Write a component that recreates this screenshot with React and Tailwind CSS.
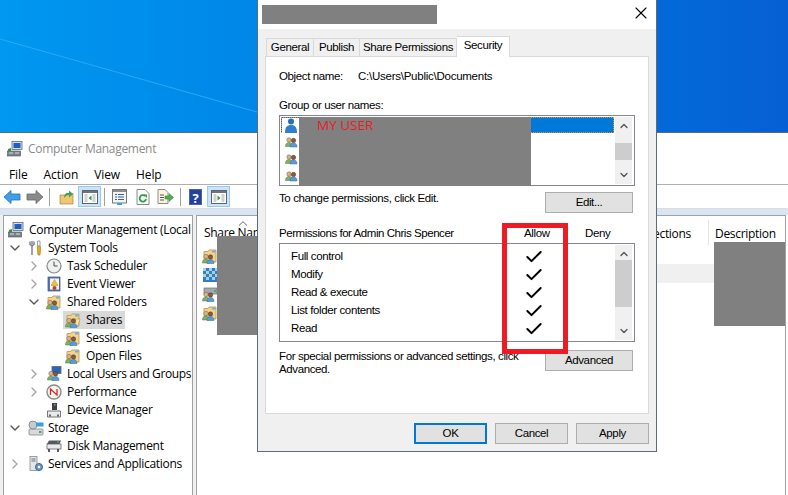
import { ChevronRight, ChevronDown, ChevronUp, Check, X } from 'lucide-react'

// ── Small console icons ───────────────────────────────────────────────────────

function People({ x = 0, y = 0 }) {
  return (
    <g transform={`translate(${x} ${y})`}>
      <circle cx="4" cy="3" r="2.2" fill="#d8b48a" stroke="#7a5a3a" strokeWidth="0.5" />
      <path d="M0.5 9.5c0-3 1.5-4 3.5-4s3.5 1 3.5 4z" fill="#7fb069" stroke="#4d7a3a" strokeWidth="0.5" />
      <circle cx="8.5" cy="3.5" r="2.2" fill="#8a5a3a" stroke="#4a3020" strokeWidth="0.5" />
      <path d="M5 10c0-3 1.5-4 3.5-4s3.5 1 3.5 4z" fill="#5b9bd5" stroke="#2d6ca8" strokeWidth="0.5" />
    </g>
  )
}

function SharedFolder({ open }) {
  return (
    <svg width="16" height="16" viewBox="0 0 16 16">
      <path d="M2 3.5h4l1-1.5h7v12H2z" fill="#f3d48a" stroke="#b8944f" strokeWidth="0.8" />
      <path d="M10 2.5h3.5v2H10z" fill="#6bb0e0" />
      {open && <path d="M6 7h9l-2 7H6z" fill="#f7e0a6" stroke="#b8944f" strokeWidth="0.6" />}
      <People x={0} y={5.5} />
    </svg>
  )
}

function PcIcon() {
  return (
    <svg width="16" height="16" viewBox="0 0 16 16">
      <rect x="5" y="0.5" width="10" height="8" fill="#d5dbe3" stroke="#5d6a7a" strokeWidth="0.8" />
      <rect x="6.5" y="2" width="7" height="5" fill="#1f5fc4" />
      <rect x="0.5" y="10" width="13" height="5" fill="#7c828a" stroke="#4b5058" strokeWidth="0.6" />
      <path d="M2 12h4M8 12h4" stroke="#d8dbe0" />
      <path d="M1 8l3-1v3H1z" fill="#3c8d3c" />
    </svg>
  )
}

function ToolsIcon() {
  return (
    <svg width="16" height="16" viewBox="0 0 16 16">
      <path d="M4 1v3.5M2 1.5v3l2 1.5 2-1.5v-3M4 6v9" fill="none" stroke="#7a7f86" strokeWidth="1.4" />
      <path d="M9.5 1h2.5v5h-2.500z" fill="#fff" stroke="#777" strokeWidth="0.7" />
      <path d="M9.5 6.500h3v4l-.5 4.500h-2l-.5-4.500z" fill="#e5a91f" stroke="#a87610" strokeWidth="0.6" />
    </svg>
  )
}

function ClockIcon() {
  return (
    <svg width="16" height="16" viewBox="0 0 16 16">
      <circle cx="8" cy="8" r="7" fill="#eef0f2" stroke="#8a8a80" strokeWidth="1.2" />
      <path d="M8 3.500V8h3.500" fill="none" stroke="#4a4a4a" strokeWidth="1" />
    </svg>
  )
}

function EventIcon() {
  return (
    <svg width="16" height="16" viewBox="0 0 16 16">
      <rect x="2" y="1" width="12" height="14" fill="#5a78b0" stroke="#33507f" strokeWidth="0.7" />
      <rect x="4" y="2.500" width="9" height="11" fill="#f2f4f8" />
      <path d="M8.500 3.500l3.500 6H5z" fill="#f2c230" stroke="#b88a10" strokeWidth="0.5" />
      <circle cx="8.500" cy="12" r="2" fill="#c83b3b" />
    </svg>
  )
}

function UsersPcIcon() {
  return (
    <svg width="16" height="16" viewBox="0 0 16 16">
      <rect x="6" y="0.500" width="9" height="7" fill="#2c62b8" stroke="#5d6a7a" strokeWidth="0.8" />
      <People x={1} y={4.500} />
    </svg>
  )
}

function PerfIcon() {
  return (
    <svg width="16" height="16" viewBox="0 0 16 16">
      <circle cx="8" cy="8" r="7" fill="#f6f3ee" stroke="#8b8b84" strokeWidth="1.4" />
      <path d="M4.500 11V5l6.500 6V5" fill="none" stroke="#c8322d" strokeWidth="1.3" />
    </svg>
  )
}

function DeviceIcon() {
  return (
    <svg width="16" height="16" viewBox="0 0 16 16">
      <rect x="6" y="1" width="5" height="7" fill="#3e434a" />
      <path d="M1.500 9h13v6h-13z" fill="#e8eaec" stroke="#555" strokeWidth="0.8" />
      <path d="M4 12.500v2M12 12.500v2" stroke="#333" strokeWidth="1.400" />
      <rect x="8" y="2" width="1.500" height="1.500" fill="#58c058" />
    </svg>
  )
}

function StorageIcon() {
  return (
    <svg width="16" height="16" viewBox="0 0 16 16">
      <rect x="1" y="9" width="14" height="6" rx="1" fill="#d7dadd" stroke="#73787e" strokeWidth="0.7" />
      <rect x="11" y="11" width="2.500" height="2" fill="#46b046" />
      <circle cx="5" cy="5" r="4" fill="#c6cbd0" stroke="#6e7378" strokeWidth="0.7" />
      <rect x="8" y="2.500" width="7.500" height="4" fill="#38a0d8" />
    </svg>
  )
}

function DiskIcon() {
  return (
    <svg width="16" height="16" viewBox="0 0 16 16">
      <path d="M3 2.500h12L13.500 6H1z" fill="#555a60" />
      <rect x="1" y="6" width="14" height="5" fill="#e8eaec" stroke="#555" strokeWidth="0.7" />
      <path d="M3 11v3M12 11v3" stroke="#333" strokeWidth="1.600" />
      <rect x="11" y="3.500" width="2" height="1" fill="#58c058" />
    </svg>
  )
}

function ServicesIcon() {
  return (
    <svg width="16" height="16" viewBox="0 0 16 16">
      <rect x="2" y="0.500" width="7" height="14" fill="#e3e5e8" stroke="#787d84" strokeWidth="0.7" />
      <path d="M3.500 3h4M3.500 5h4" stroke="#6f747a" />
      <circle cx="11" cy="11" r="3.500" fill="#6a9bc8" stroke="#35658f" strokeWidth="1" />
      <circle cx="11" cy="11" r="1.200" fill="#fff" />
    </svg>
  )
}

function ShareTileIcon() {
  return (
    <svg width="16" height="16" viewBox="0 0 16 16">
      <rect x="1" y="1" width="14" height="14" fill="#2f7fc8" />
      <path d="M1 1h3v3H1zM7 1h3v3H7zM13 1h2v3h-2zM4 4h3v3H4zM10 4h3v3h-3zM1 7h3v3H1zM7 7h3v3H7zM13 7h2v3h-2zM4 10h3v3H4zM10 10h3v3h-3z" fill="#a9d2f0" />
    </svg>
  )
}

function PrinterShareIcon() {
  return (
    <svg width="16" height="16" viewBox="0 0 16 16">
      <rect x="2" y="2" width="13" height="6" fill="#a5a8ac" stroke="#6a6d72" strokeWidth="0.7" />
      <rect x="12" y="4" width="2" height="2" fill="#46b046" />
      <People x={0} y={5.500} />
    </svg>
  )
}

// ── Toolbar icons ─────────────────────────────────────────────────────────────

function Arrow({ left, gray }) {
  const fill = gray ? '#8a8a8a' : '#3f9fe8'
  const stroke = gray ? '#666666' : '#1f6fb8'
  return (
    <svg width="18" height="16" viewBox="0 0 18 16">
      <path
        d={left ? 'M1 8l7-6.500V5h9v6H8v3.500z' : 'M17 8l-7-6.500V5H1v6h9v3.500z'}
        fill={fill}
        stroke={stroke}
        strokeWidth="0.8"
      />
    </svg>
  )
}

function PaneIcon({ dir }) {
  return (
    <svg width="16" height="14" viewBox="0 0 16 14">
      <rect x="0.500" y="0.500" width="15" height="13" fill="#fff" stroke="#5f6368" />
      <rect x="1" y="1" width="14" height="2" fill="#6f7378" />
      <path d="M2.500 5h3M2.500 7h3M2.500 9h3M2.500 11h3M10.500 5h3M10.500 7h3M10.500 9h3M10.500 11h3" stroke="#8a8d91" strokeWidth="0.8" />
      <path d={dir === 'left' ? 'M9.500 5.500v5l-3-2.500z' : 'M6.500 5.500v5l3-2.500z'} fill="#2f9e44" />
    </svg>
  )
}

function ToolGlyph({ kind }) {
  if (kind === 'up') {
    return (
      <svg width="15" height="16" viewBox="0 0 15 16">
        <path d="M1 6h5l1-1.500h7V15H1z" fill="#eec774" stroke="#a8853f" strokeWidth="0.7" />
        <path d="M5 9c0-3 2-5 5-5V1.500L14 5l-4 3.500V6c-2 0-3.500 1-5 3z" fill="#3fa34d" />
      </svg>
    )
  }
  if (kind === 'props') {
    return (
      <svg width="15" height="16" viewBox="0 0 15 16">
        <rect x="0.500" y="0.500" width="14" height="13.500" fill="#f4f4f4" stroke="#777" />
        <rect x="1" y="1" width="13" height="2" fill="#8b8f94" />
        <path d="M3 5.500h2M6 5.500h6M3 8h2M6 8h6M3 10.500h2M6 10.500h6" stroke="#35649b" />
        <rect x="5" y="14" width="5" height="2" fill="#3f9fe8" />
      </svg>
    )
  }
  if (kind === 'refresh') {
    return (
      <svg width="14" height="16" viewBox="0 0 14 16">
        <path d="M1 .500h8l4 4v11H1z" fill="#fafafa" stroke="#8a8a8a" />
        <path d="M10 10a3.200 3.200 0 1 1-1-3" fill="none" stroke="#2f9e44" strokeWidth="1.800" />
        <path d="M7.500 5.500h3.500V9z" fill="#2f9e44" />
      </svg>
    )
  }
  return (
    <svg width="17" height="16" viewBox="0 0 17 16">
      <path d="M1 .500h7l3 3v11H1z" fill="#fbf4df" stroke="#8a8a8a" />
      <path d="M3 6h4M3 8.500h4M3 11h4" stroke="#555" />
      <path d="M8 7h4V4.500L16.500 8.500 12 12.500V10H8z" fill="#4caf50" stroke="#2e7d32" strokeWidth="0.5" />
    </svg>
  )
}

function HelpIcon() {
  return (
    <div className="w-[13px] h-[16px] bg-[#23409b] text-white font-bold text-[13px] leading-[16px] text-center border border-[#4a63b8]">?</div>
  )
}

function ToolButton({ active, children }) {
  return (
    <div className={`w-[23px] h-[21px] flex items-center justify-center border ${active ? 'bg-[#cce4f7] border-[#99c9ef]' : 'border-transparent'}`}>
      {children}
    </div>
  )
}

function ToolSep() {
  return <div className="w-px h-[18px] bg-[#a0a0a0] mx-[3px]" />
}

// ── Tree ──────────────────────────────────────────────────────────────────────

const treeRows = [
  { label: 'Computer Management (Local', pad: 'pl-[4px]', icon: PcIcon },
  { label: 'System Tools', pad: 'pl-[3px]', mr: 'mr-[5px]', gap: 'gap-[4px]', toggle: 'down', icon: ToolsIcon },
  { label: 'Task Scheduler', pad: 'pl-[22px]', mr: 'mr-[4px]', toggle: 'right', icon: ClockIcon },
  { label: 'Event Viewer', pad: 'pl-[22px]', mr: 'mr-[4px]', toggle: 'right', icon: EventIcon },
  { label: 'Shared Folders', pad: 'pl-[22px]', mr: 'mr-[4px]', toggle: 'down', icon: SharedFolder },
  { label: 'Shares', pad: 'pl-[61px]', icon: SharedFolder, selected: true, open: true },
  { label: 'Sessions', pad: 'pl-[61px]', icon: SharedFolder },
  { label: 'Open Files', pad: 'pl-[61px]', icon: SharedFolder },
  { label: 'Local Users and Groups', pad: 'pl-[22px]', mr: 'mr-[4px]', toggle: 'right', icon: UsersPcIcon, tight: true },
  { label: 'Performance', pad: 'pl-[22px]', mr: 'mr-[4px]', toggle: 'right', icon: PerfIcon },
  { label: 'Device Manager', pad: 'pl-[42px]', icon: DeviceIcon },
  { label: 'Storage', pad: 'pl-[3px]', mr: 'mr-[5px]', gap: 'gap-[4px]', toggle: 'down', icon: StorageIcon },
  { label: 'Disk Management', pad: 'pl-[42px]', icon: DiskIcon },
  { label: 'Services and Applications', pad: 'pl-[3px]', mr: 'mr-[5px]', gap: 'gap-[4px]', toggle: 'right', icon: ServicesIcon },
]

function TreeRow({ row }) {
  const Icon = row.icon
  return (
    <div className={`flex items-center h-[18px] whitespace-nowrap ${row.pad}`}>
      {row.toggle === 'down' && <ChevronDown size={16} strokeWidth={2} className={`text-[#555] shrink-0 ${row.mr}`} />}
      {row.toggle === 'right' && <ChevronRight size={16} strokeWidth={2} className={`text-[#a6a6a6] shrink-0 ${row.mr}`} />}
      <div className={`flex items-center h-[18px] pr-[3px] ${row.gap || 'gap-[5px]'} ${row.selected ? 'bg-[#d9d9d9] -ml-[2px] pl-[2px]' : ''}`}>
        <span className="shrink-0"><Icon open={row.open} /></span>
        <span className={row.tight ? 'tracking-[-0.4px]' : ''}>{row.label}</span>
      </div>
    </div>
  )
}

// ── Dialog bits ───────────────────────────────────────────────────────────────

function ScrollBar({ thumb }) {
  return (
    <div className="w-[17px] bg-[#f0f0f0] flex flex-col items-center shrink-0 self-stretch m-px mr-[2px]">
      <ChevronUp size={12} strokeWidth={2.500} className="text-[#505050] mt-[3px] shrink-0" />
      <div className={`w-full bg-[#cdcdcd] ${thumb}`} />
      <ChevronDown size={12} strokeWidth={2.500} className="text-[#505050] mt-auto mb-[3px] shrink-0" />
    </div>
  )
}

function DlgButton({ label, focus, className = '' }) {
  return (
    <div className={`h-[21px] flex items-center justify-center bg-[#e1e1e1] text-black ${focus ? 'border-2 border-[#0078d7]' : 'border border-[#adadad]'} ${className}`}>
      {label}
    </div>
  )
}

const permissions = ['Full control', 'Modify', 'Read & execute', 'List folder contents', 'Read']

function SecurityDialog() {
  return (
    <div className="absolute left-[257px] top-0 w-[400px] h-[452px] bg-[#f0f0f0] border border-[#5f6b78] border-t-0 flex flex-col text-[11.500px] text-black font-['Liberation_Sans',sans-serif] tracking-[-0.38px]">
      <div className="h-[29px] bg-white flex items-center justify-between shrink-0 pr-[5px]">
        <div className="w-[175px] h-[19px] bg-[#808080] ml-[4px] -mt-[1px]" />
        <X size={20} strokeWidth={1.300} className="text-black -mt-[3px]" />
      </div>

      <div className="flex items-end h-[27px] pl-[8px] shrink-0">
        <div className="h-[18px] w-[48px] flex items-center justify-center bg-[#f0f0f0] border border-[#d9d9d9] border-b-0">General</div>
        <div className="h-[18px] w-[46px] flex items-center justify-center bg-[#f0f0f0] border border-[#d9d9d9] border-b-0 border-l-0">Publish</div>
        <div className="h-[18px] w-[97px] flex items-center justify-center bg-[#f0f0f0] border border-[#d9d9d9] border-b-0 border-l-0">Share Permissions</div>
        <div className="h-[21px] w-[53px] flex items-center justify-center bg-white border border-[#d9d9d9] border-b-0 border-l-0 relative z-10 -mb-px pb-[2px]">Security</div>
      </div>

      <div className="ml-[7px] w-[384px] h-[358px] bg-white border border-[#d9d9d9] shrink-0 px-[13px] flex flex-col">
        <div className="flex mt-[13px] h-[14px] items-center shrink-0">
          <span className="w-[79px]">Object name:</span>
          <span className="tracking-[-0.25px]">C:\Users\Public\Documents</span>
        </div>

        <div className="mt-[15px] h-[14px] flex items-center shrink-0">Group or user names:</div>

        <div className="relative mt-[2px] w-[356px] h-[71px] border border-[#828790] flex shrink-0">
          <div className="flex-1 flex flex-col">
            <div className="h-[17px] mt-[1px] ml-[1px] bg-[#0078d7] border border-dotted border-[#e8913a] relative">
              <div className="absolute left-0 top-0 w-[18px] h-[15px] bg-white flex items-center justify-center">
                <svg width="14" height="15" viewBox="0 0 14 15">
                  <circle cx="7" cy="3.500" r="3" fill="#2a6fb0" />
                  <path d="M1 15c0-6 2-8 6-8s6 2 6 8z" fill="#2f80c8" />
                </svg>
              </div>
            </div>
            {[0, 1, 2].map((i) => (
              <div key={i} className="h-[18px] pl-[4px] flex items-center">
                <svg width="15" height="14" viewBox="0 0 15 14">
                  <People x={1} y={2} />
                </svg>
              </div>
            ))}
          </div>
          <ScrollBar thumb="h-[17px] mt-[11px]" />
        </div>

        <div className="mt-[6px] flex items-start justify-between w-[354px] shrink-0">
          <span className="-mt-[2px]">To change permissions, click Edit.</span>
          <DlgButton label="Edit..." className="w-[88px]" />
        </div>

        <div className="mt-[14px] h-[14px] flex items-center shrink-0 relative">
          <span className="tracking-[-0.45px]">Permissions for Admin Chris Spencer</span>
          <span className="absolute left-[245px]">Allow</span>
          <span className="absolute left-[306px]">Deny</span>
        </div>

        <div className="mt-[2px] w-[356px] h-[99px] border border-[#828790] flex shrink-0">
          <div className="flex-1 pt-[4px] relative">
            {permissions.map((p) => (
              <div key={p} className="h-[18px] flex items-center pl-[11px] relative">
                <span>{p}</span>
                <Check size={20} strokeWidth={2.400} className="absolute left-[244px] -top-[1px] text-black" />
              </div>
            ))}
          </div>
          <ScrollBar thumb="h-[47px]" />
        </div>

        <div className="mt-[8px] flex items-start justify-between w-[354px] shrink-0">
          <div className="leading-[13px] w-[250px] whitespace-nowrap">
            For special permissions or advanced settings, click<br />Advanced.
          </div>
          <DlgButton label="Advanced" className="w-[88px]" />
        </div>
      </div>

      <div className="flex justify-end gap-[8px] mt-[9px] pr-[7px]">
        <DlgButton label="OK" focus className="w-[73px]" />
        <DlgButton label="Cancel" className="w-[73px]" />
        <DlgButton label="Apply" className="w-[73px]" />
      </div>
    </div>
  )
}

// ── Page ──────────────────────────────────────────────────────────────────────

export default function App() {
  return (
    <div className="relative w-[788px] h-[495px] overflow-hidden flex flex-col bg-white font-['Open_Sans',sans-serif] text-[12px] text-black">
      {/* Desktop wallpaper */}
      <div className="h-[133px] shrink-0 relative overflow-hidden bg-gradient-to-r from-[#0098f0] to-[#0660d4] border-b border-[#5a6a78]">
        <svg width="788" height="133" viewBox="0 0 788 133" className="absolute inset-0">
          <path d="M0 39L257 112" fill="none" stroke="#2aa8f5" strokeWidth="1" />
        </svg>
      </div>

      {/* Computer Management window */}
      <div className="flex-1 flex flex-col min-h-0">
        <div className="h-[32px] flex items-center gap-[5px] pl-[7px] shrink-0">
          <PcIcon />
          <span className="text-[#8a8a8a] tracking-[-0.3px]">Computer Management</span>
        </div>
        <div className="h-[20px] flex items-center gap-[16px] pl-[9px] border-b border-[#b0b0b0] shrink-0 tracking-[-0.1px]">
          <span>File</span>
          <span>Action</span>
          <span>View</span>
          <span>Help</span>
        </div>
        <div className="h-[24px] flex items-center pl-[3px] border-b border-[#dcdcdc] shrink-0">
          <Arrow left />
          <span className="ml-[5px]"><Arrow gray /></span>
          <span className="ml-[2px] mr-[2px]"><ToolSep /></span>
          <ToolButton><ToolGlyph kind="up" /></ToolButton>
          <ToolButton active><PaneIcon dir="left" /></ToolButton>
          <ToolSep />
          <ToolButton><ToolGlyph kind="props" /></ToolButton>
          <ToolButton><ToolGlyph kind="refresh" /></ToolButton>
          <ToolButton><ToolGlyph kind="export" /></ToolButton>
          <ToolSep />
          <ToolButton><HelpIcon /></ToolButton>
          <ToolButton active><PaneIcon dir="right" /></ToolButton>
        </div>
        <div className="h-[6px] bg-[#d9e5f2] shrink-0" />

        <div className="flex-1 flex min-h-0 bg-[#f0f0f0] pl-[3px] tracking-[-0.3px]">
          <div className="w-[190px] mr-[3px] bg-white border border-[#a0a0a0] border-b-0 pt-[5px] overflow-hidden shrink-0">
            {treeRows.map((row) => (
              <TreeRow key={row.label} row={row} />
            ))}
          </div>
          <div className="flex-1 bg-white border border-[#a0a0a0] border-b-0 relative">
            <div className="h-[29px] flex items-center">
              <div className="pl-[7px] w-[60px] overflow-hidden whitespace-nowrap pt-[4px]">Share Name</div>
              <div className="ml-auto flex items-center h-full pt-[4px]">
                <span className="pr-[17px] pt-[3px]">ections</span>
                <div className="h-[25px] w-px bg-[#e5e5e5]" />
                <span className="pl-[6px] w-[76px] pt-[3px]">Description</span>
              </div>
            </div>
            <svg width="10" height="5" viewBox="0 0 10 5" className="absolute left-[41px] top-[5px]">
              <path d="M1 4.500L5 .700l4 3.800" fill="none" stroke="#666" />
            </svg>
            <div className="absolute left-[20px] top-[20px] w-[40px] h-[99px] bg-[#808080]" />
            <div className="absolute right-0 top-[26px] w-[71px] h-[84px] bg-[#808080]" />
            <div className="absolute left-[460px] right-[71px] top-[48px] h-[19px] bg-[#f0f0f0]" />
            <div className="pl-[5px] mt-[1px]">
              <div className="h-[19px] flex items-center"><SharedFolder /></div>
              <div className="h-[19px] flex items-center"><ShareTileIcon /></div>
              <div className="h-[19px] flex items-center"><PrinterShareIcon /></div>
              <div className="h-[19px] flex items-center"><SharedFolder /></div>
            </div>
          </div>
          <div className="w-[2px] bg-white shrink-0" />
        </div>
      </div>

      <SecurityDialog />

      {/* Redactions and markup painted on the screenshot */}
      <div className="absolute left-[299px] top-[117px] w-[232px] h-[69px] bg-[#808080] text-[#ed1c24] text-[13.500px] font-['Open_Sans',sans-serif] pl-[18px] leading-[16px]">MY USER</div>
      <div className="absolute left-[502px] top-[223px] w-[66px] h-[131px] border-[5px] border-[#ed1c24]" />
    </div>
  )
}
